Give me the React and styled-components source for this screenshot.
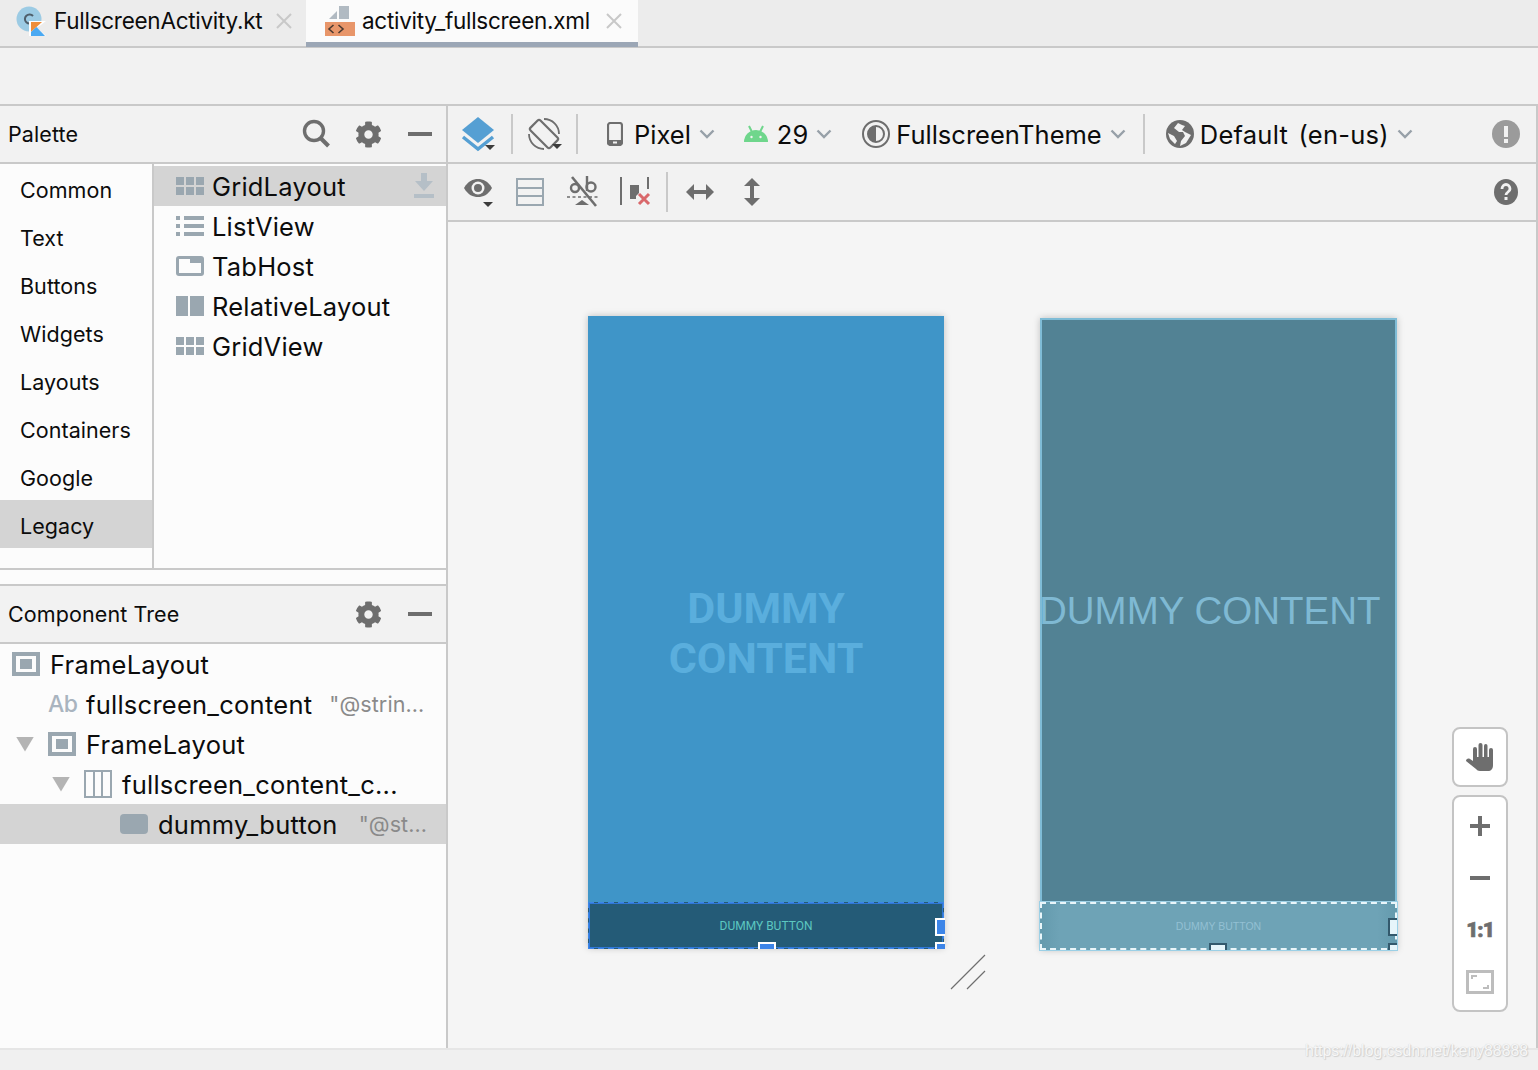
import React from "react";
import styled, { createGlobalStyle } from "styled-components";
import { FaCog } from "react-icons/fa";

const GRAY = "#6e6e6e";
const SLATE = "#9aa7b0";

const GlobalStyle = createGlobalStyle`
	html, body {
		margin: 0;
		padding: 0;
		background: #f2f2f2;
	}
	body {
		font-family: "Inter", "Liberation Sans", sans-serif;
		color: #0c0c0c;
		overflow: hidden;
	}
	* {
		box-sizing: border-box;
	}
`;

const Window = styled.div`
	width: 1538px;
	height: 1070px;
	display: flex;
	flex-direction: column;
	position: relative;
	overflow: hidden;
`;

const TabBar = styled.div`
	height: 48px;
	display: flex;
	background: #ececec;
	border-bottom: 2px solid #c9c9c9;
`;

const Tab = styled.div`
	width: ${(p) => p.$width}px;
	height: ${(p) => (p.$active ? 47 : 46)}px;
	padding-left: ${(p) => p.$pad}px;
	padding-bottom: ${(p) => (p.$active ? 0 : 4)}px;
	display: flex;
	align-items: center;
	background: ${(p) => (p.$active ? "#fbfbfb" : "transparent")};
	border-bottom: ${(p) => (p.$active ? "5px solid #9ca7b6" : "0")};
`;

const TabLabel = styled.span`
	font-size: 22.5px;
	letter-spacing: -0.27px;
	margin: ${(p) => (p.$active ? "-1px 15px 0 7px" : "-1px 13px 0 8px")};
	white-space: nowrap;
`;

const EmptyBar = styled.div`
	height: 58px;
	background: #f2f2f2;
	border-bottom: 2px solid #c9c9c9;
`;

const Main = styled.div`
	height: 942px;
	display: flex;
`;

const LeftPanel = styled.div`
	width: 448px;
	flex: none;
	display: flex;
	flex-direction: column;
	background: #fcfcfc;
	border-right: 2px solid #c9c9c9;
`;

const PanelHeader = styled.div`
	height: 58px;
	flex: none;
	padding: 0 14px 0 8px;
	display: flex;
	align-items: center;
	background: #f2f2f2;
	border-bottom: 2px solid #c9c9c9;
`;

const PanelTitle = styled.span`
	font-size: 21.5px;
	letter-spacing: 0.1px;
	margin-right: auto;
`;

const HeaderIcon = styled.span`
	display: flex;
	align-items: center;
	justify-content: center;
	margin-left: ${(p) => p.$left || 0}px;
	color: ${GRAY};
`;

const Palette = styled.div`
	height: 406px;
	flex: none;
	display: flex;
	border-bottom: 2px solid #c9c9c9;
`;

const Categories = styled.div`
	width: 154px;
	border-right: 2px solid #c9c9c9;
`;

const Category = styled.div`
	height: 48px;
	padding: 4px 0 0 20px;
	display: flex;
	align-items: center;
	font-size: 21.5px;
	letter-spacing: 0.05px;
	background: ${(p) => (p.$active ? "#d4d4d4" : "transparent")};
`;

const Widgets = styled.div`
	flex: 1;
	padding-top: 2px;
`;

const WidgetRow = styled.div`
	height: 40px;
	padding: 0 12px 0 22px;
	display: flex;
	align-items: center;
	gap: 8px;
	font-size: 25.5px;
	letter-spacing: 0.2px;
	background: ${(p) => (p.$active ? "#d4d4d4" : "transparent")};
`;

const Download = styled.span`
	display: flex;
	margin-left: auto;
`;

const Gap = styled.div`
	height: 16px;
	flex: none;
	border-bottom: 2px solid #c9c9c9;
`;

const Tree = styled.div`
	flex: 1;
`;

const TreeRow = styled.div`
	height: 40px;
	padding-left: ${(p) => p.$indent}px;
	display: flex;
	align-items: center;
	font-size: 25.5px;
	letter-spacing: 0.25px;
	white-space: nowrap;
	background: ${(p) => (p.$active ? "#d4d4d4" : "transparent")};
`;

const Twisty = styled.span`
	width: 18px;
	height: 15px;
	margin-right: 14px;
	background: #b4b4b4;
	clip-path: polygon(0 0, 100% 0, 50% 100%);
`;

const TreeIcon = styled.span`
	display: flex;
	width: 28px;
	margin-right: 10px;
`;

const AbIcon = styled.span`
	width: 28px;
	margin-right: 10px;
	color: #a9b4bf;
	font-size: 23px;
	font-weight: 500;
	letter-spacing: -0.5px;
`;

const Hint = styled.span`
	color: #8a8a8a;
	font-size: 21.5px;
	letter-spacing: 0.1px;
	margin-left: ${(p) => p.$left}px;
`;

const Designer = styled.div`
	flex: 1;
	min-width: 0;
	display: flex;
	flex-direction: column;
	border-right: 2px solid #c9c9c9;
`;

const Toolbar = styled.div`
	height: 58px;
	flex: none;
	padding: 0 16px 0 14px;
	display: flex;
	align-items: center;
	background: #f2f2f2;
	border-bottom: 2px solid #c9c9c9;
`;

const Tool = styled.span`
	display: flex;
	align-items: center;
	flex: none;
	margin-left: ${(p) => (p.$push ? "auto" : `${p.$left || 0}px`)};
	margin-right: ${(p) => p.$right || 0}px;
`;

const Divider = styled.span`
	width: 2px;
	height: 40px;
	flex: none;
	background: #c9c9c9;
	margin-left: ${(p) => p.$left}px;
`;

const ToolLabel = styled.span`
	font-size: 25.5px;
	letter-spacing: ${(p) => p.$spacing || 0}px;
	word-spacing: ${(p) => p.$wordGap || 0}px;
	white-space: pre;
	margin: 0 8px 0 ${(p) => p.$left}px;
`;

const Canvas = styled.div`
	flex: 1;
	position: relative;
	display: flex;
	gap: 96px;
	padding: 94px 0 0 140px;
	background: #f5f5f5;
`;

const PhoneFrame = styled.div`
	width: ${(p) => p.$width}px;
	height: 632px;
	margin-top: ${(p) => p.$top}px;
	position: relative;
	box-shadow: 0 0 7px rgba(0, 0, 0, 0.22);
`;

const DesignFrame = styled(PhoneFrame)`
	display: flex;
	align-items: center;
	justify-content: center;
	padding-top: 2px;
	font-family: "Roboto", "Liberation Sans", sans-serif;
	background: #3f95c8;
`;

const BlueprintFrame = styled(PhoneFrame)`
	font-family: "Liberation Sans", sans-serif;
	background: #528294;
	border: 2px solid #7fbcd6;
	border-bottom: 0;
`;

const DesignText = styled.div`
	width: 240px;
	color: #5aaedd;
	font-size: 43px;
	line-height: 50px;
	font-weight: 700;
	text-align: center;
`;

const BlueprintText = styled.div`
	height: 582px;
	margin-left: -3px;
	display: flex;
	align-items: center;
	color: #7fb9d3;
	font-size: 38.5px;
	white-space: nowrap;
`;

const ButtonBar = styled.div`
	position: absolute;
	left: 0;
	right: 0;
	bottom: -1px;
	height: 47px;
	display: flex;
	align-items: center;
	justify-content: center;
	font-size: 12px;
	background: #245b77;
	color: #5cc7c0;
	border: 2px dashed #3d85e8;
	outline: 1px solid #2f78d8;
	outline-offset: -2px;
`;

const BlueprintBar = styled(ButtonBar)`
	left: -2px;
	right: -2px;
	bottom: 0;
	height: 48px;
	font-size: 10.5px;
	background: linear-gradient(90deg, #659bae 0, #6ea3b6 5%, #6ea3b6 95%, #659bae 100%);
	color: #93c0d3;
	border: 2px dashed #eaf6fa;
	outline: 1px solid #9bd0e6;
	outline-offset: 0;
`;

const Handle = styled.span`
	position: absolute;
	width: ${(p) => p.$w}px;
	height: ${(p) => p.$h}px;
	right: ${(p) => p.$right ?? "auto"};
	left: ${(p) => p.$hleft ?? "auto"};
	top: ${(p) => (p.$top !== undefined ? `${p.$top}px` : "auto")};
	bottom: -2px;
	background: ${(p) => p.$fill};
	border: 2px solid ${(p) => p.$line};
	border-bottom: 0;
`;

const SideHandle = styled(Handle)`
	bottom: auto;
	border-bottom: 2px solid ${(p) => p.$line};
	border-right: 0;
`;

const CornerHandle = styled(Handle)`
	border-right: 0;
`;

const ResizeMark = styled.svg`
	position: absolute;
	left: 502px;
	top: 732px;
`;

const FloatStack = styled.div`
	position: absolute;
	right: 28px;
	bottom: 36px;
	display: flex;
	flex-direction: column;
	gap: 8px;
`;

const FloatBox = styled.div`
	width: 56px;
	padding: ${(p) => p.$pad};
	display: flex;
	flex-direction: column;
	align-items: center;
	gap: ${(p) => p.$gap}px;
	background: #fff;
	border: 2px solid #c4c4c4;
	border-radius: 8px;
`;

const ZoomSlot = styled.span`
	height: 36px;
	display: flex;
	align-items: center;
	justify-content: center;
	color: ${GRAY};
`;

const OneToOne = styled.span`
	font-family: "Roboto", sans-serif;
	font-size: 21px;
	font-weight: 900;
	letter-spacing: -1px;
	-webkit-text-stroke: 0.7px ${GRAY};
`;

const StatusBar = styled.div`
	height: 22px;
	flex: none;
	background: #f0f0f0;
	border-top: 2px solid #e6e6e6;
`;

const Watermark = styled.div`
	position: absolute;
	right: 10px;
	bottom: 10px;
	color: #f7f7f7;
	font-family: "Liberation Sans", sans-serif;
	font-size: 15.8px;
	text-shadow: 0 0 1px #c9c9c9, 1px 1px 1px #d0d0d0;
`;

const Chevron = () => (
	<svg width="16" height="10" viewBox="0 0 16 10" fill="none">
		<path d="M1.5 1.5 8 8l6.5-6.5" stroke="#97a0a8" strokeWidth="2.4" />
	</svg>
);

const CloseX = () => (
	<svg width="18" height="18" viewBox="0 0 18 18" fill="none">
		<path d="M2 2l14 14M16 2 2 16" stroke="#c8c8c8" strokeWidth="2" />
	</svg>
);

const KotlinFile = () => (
	<svg width="30" height="30" viewBox="0 0 30 30">
		<circle cx="13" cy="13" r="12.5" fill="#9ccbe4" />
		<path d="M17 10a4.6 4.6 0 1 0 0 6" fill="none" stroke="#4f5f6b" strokeWidth="2" />
		<path d="M13 30V15h17L21 22l9 8z" fill="#fff" />
		<path d="M15 16h11l-11 10z" fill="#ef8e3a" />
		<path d="M15 26l5.5-5L29 30H15z" fill="#4aa9f2" />
	</svg>
);

const XmlFile = () => (
	<svg width="30" height="30" viewBox="0 0 30 30">
		<path d="M4 13 12 5v8zM14 0h10v13H14z" fill="#b1bac2" />
		<rect y="16" width="30" height="14" fill="#e8966a" />
		<path d="M8.5 19 4 23l4.500 4M13.500 19l4.500 4-4.500 4" fill="none" stroke="#4b3a30" strokeWidth="1.600" />
	</svg>
);

const SearchIcon = () => (
	<svg width="30" height="30" viewBox="0 0 30 30" fill="none">
		<circle cx="13" cy="12" r="9.500" stroke={GRAY} strokeWidth="3.400" />
		<path d="m19.500 19 8 8" stroke={GRAY} strokeWidth="4" />
	</svg>
);

const MinusIcon = ({ width = 24 }) => (
	<svg width={width} height="4" viewBox={`0 0 ${width} 4`}>
		<rect width={width} height="4" fill={GRAY} />
	</svg>
);

const DownloadIcon = () => (
	<svg width="20" height="26" viewBox="0 0 20 26">
		<path d="M7 0h6v8h6l-9 10L1 8h6z" fill="#b5bfc7" />
		<rect y="21" width="20" height="4" fill="#b5bfc7" />
	</svg>
);

const GridIcon = () => (
	<svg width="28" height="18" viewBox="0 0 28 18" fill={SLATE}>
		<rect width="8" height="8" />
		<rect x="10" width="8" height="8" />
		<rect x="20" width="8" height="8" />
		<rect y="10" width="8" height="8" />
		<rect x="10" y="10" width="8" height="8" />
		<rect x="20" y="10" width="8" height="8" />
	</svg>
);

const ListIcon = () => (
	<svg width="28" height="20" viewBox="0 0 28 20" fill={SLATE}>
		<rect width="4" height="4" />
		<rect x="8" width="20" height="4" />
		<rect y="8" width="4" height="4" />
		<rect x="8" y="8" width="20" height="4" />
		<rect y="16" width="4" height="4" />
		<rect x="8" y="16" width="20" height="4" />
	</svg>
);

const TabHostIcon = () => (
	<svg width="28" height="20" viewBox="0 0 28 20">
		<rect width="28" height="20" rx="3" fill={SLATE} />
		<path d="M3 3h11v4h11v10H3z" fill="#fcfcfc" />
	</svg>
);

const RelativeIcon = () => (
	<svg width="28" height="20" viewBox="0 0 28 20" fill={SLATE}>
		<rect width="12" height="20" />
		<rect x="14" width="14" height="20" />
	</svg>
);

const FrameIcon = () => (
	<svg width="28" height="24" viewBox="0 0 28 24">
		<rect x="2" y="2" width="24" height="20" fill="none" stroke={SLATE} strokeWidth="4" />
		<rect x="8" y="7" width="12" height="10" fill={SLATE} />
	</svg>
);

const ColumnsIcon = () => (
	<svg width="28" height="28" viewBox="0 0 28 28" fill="none" stroke={SLATE} strokeWidth="2">
		<rect x="1" y="1" width="26" height="26" />
		<path d="M10 1v26M18 1v26" />
	</svg>
);

const ButtonIcon = () => (
	<svg width="28" height="20" viewBox="0 0 28 20">
		<rect width="28" height="20" rx="4" fill={SLATE} />
	</svg>
);

const LayersIcon = () => (
	<svg width="36" height="36" viewBox="0 0 36 36">
		<path d="M17 1 33 14 17 27 1 14z" fill="#559fd3" />
		<path d="M2 21l15 12 15-12" fill="none" stroke="#559fd3" strokeWidth="3.500" />
		<path d="M24 29h10l-5 5z" fill="#3c3c3c" />
	</svg>
);

const RotateIcon = () => (
	<svg width="36" height="34" viewBox="0 0 36 34" fill="none" stroke={GRAY}>
		<rect x="9" y="3" width="14" height="28" rx="2" strokeWidth="2.200" transform="rotate(-45 16 17)" />
		<path d="M16 2a15 15 0 0 1 15 15M16 32A15 15 0 0 1 1 17" strokeWidth="1.800" />
		<path d="M24 27h10l-5 5z" fill="#3c3c3c" stroke="none" />
	</svg>
);

const PhoneIcon = () => (
	<svg width="16" height="24" viewBox="0 0 16 24">
		<rect x="1" y="1" width="14" height="22" rx="2.500" fill="none" stroke={GRAY} strokeWidth="2.200" />
		<rect x="1" y="18" width="14" height="5" fill={GRAY} />
		<rect x="6" y="19.500" width="4" height="2" fill="#f2f2f2" />
	</svg>
);

const AndroidIcon = () => (
	<svg width="24" height="18" viewBox="0 0 24 18">
		<path d="M0 17a12 12 0 0 1 24 0z" fill="#6fd68c" />
		<path d="M5 1l3 6M19 1l-3 6" stroke="#6fd68c" strokeWidth="2" />
		<circle cx="7.500" cy="12" r="1.200" fill="#f2f2f2" />
		<circle cx="16.500" cy="12" r="1.200" fill="#f2f2f2" />
	</svg>
);

const ThemeIcon = () => (
	<svg width="28" height="28" viewBox="0 0 28 28">
		<circle cx="14" cy="14" r="13" fill="none" stroke={GRAY} strokeWidth="2" />
		<circle cx="14" cy="14" r="8" fill="none" stroke={GRAY} strokeWidth="2" />
		<path d="M14 6a8 8 0 0 0 0 16z" fill={GRAY} />
	</svg>
);

const GlobeIcon = () => (
	<svg width="28" height="28" viewBox="0 0 28 28">
		<circle cx="14" cy="14" r="14" fill={GRAY} />
		<path d="M12 3 8 8l5 4 4 0 2 4-4 5-1 5 6-3 5-8-2-1-4-2-3-2 3-4-3-1zM2 13l6 3 3 5-2 3-5-5z" fill="#f2f2f2" />
	</svg>
);

const AlertIcon = () => (
	<svg width="28" height="28" viewBox="0 0 28 28">
		<circle cx="14" cy="14" r="14" fill="#9b9b9b" />
		<rect x="12" y="6" width="4" height="11" fill="#f2f2f2" />
		<rect x="12" y="19" width="4" height="4" fill="#f2f2f2" />
	</svg>
);

const EyeIcon = () => (
	<svg width="34" height="34" viewBox="0 0 34 34">
		<path d="M1 13C5 6 10 4 15 4s10 2 14 9c-4 7-9 9-14 9S5 20 1 13z" fill={GRAY} />
		<circle cx="15" cy="13" r="6.500" fill="#f2f2f2" />
		<circle cx="15" cy="13" r="4" fill={GRAY} />
		<path d="M20 27h10l-5 5z" fill="#3c3c3c" />
	</svg>
);

const RowsIcon = () => (
	<svg width="28" height="28" viewBox="0 0 28 28" fill="none" stroke={SLATE} strokeWidth="2">
		<rect x="1" y="1" width="26" height="26" />
		<path d="M1 10h26M1 18h26" />
	</svg>
);

const BaselineIcon = () => (
	<svg width="34" height="34" viewBox="0 0 34 34" fill="none">
		<path d="M6 2l24 29" stroke={GRAY} strokeWidth="2.600" />
		<path d="M21 1v15" stroke={GRAY} strokeWidth="2.400" />
		<circle cx="25" cy="12" r="4.500" stroke={GRAY} strokeWidth="2.400" />
		<circle cx="9" cy="13" r="4" stroke={GRAY} strokeWidth="2.400" />
		<path d="M1 22h31" stroke={GRAY} strokeWidth="1.600" strokeDasharray="3 2.500" />
		<path d="M9 30l7-5 7 5z" fill={GRAY} />
	</svg>
);

const ClearIcon = () => (
	<svg width="32" height="30" viewBox="0 0 32 30">
		<rect width="2" height="28" fill={GRAY} />
		<path d="M10 8h9v8l-3 3v3h-6z" fill={GRAY} />
		<rect x="27" width="2" height="12" fill={GRAY} />
		<path d="m19 17 10 10M29 17 19 27" stroke="#d9686b" strokeWidth="3" />
	</svg>
);

const ArrowH = () => (
	<svg width="28" height="16" viewBox="0 0 28 16" fill={GRAY}>
		<path d="M0 8l8-8v6h12V0l8 8-8 8v-6H8v6z" />
	</svg>
);

const ArrowV = () => (
	<svg width="16" height="28" viewBox="0 0 16 28" fill={GRAY}>
		<path d="M8 0l8 8h-6v12h6l-8 8-8-8h6V8H0z" />
	</svg>
);

const HelpIcon = () => (
	<svg width="24" height="26" viewBox="0 0 24 26">
		<ellipse cx="12" cy="13" rx="12" ry="13" fill={GRAY} />
		<path d="M8 10c0-6 8-6 8 0 0 3-4 3-4 6" fill="none" stroke="#f2f2f2" strokeWidth="2.800" />
		<rect x="10.500" y="18" width="3" height="3" fill="#f2f2f2" />
	</svg>
);

const HandIcon = () => (
	<svg width="28" height="30" viewBox="0 0 28 30" fill={GRAY}>
		<rect x="7" y="5" width="4" height="16" rx="2" />
		<rect x="12.500" y="1" width="4" height="20" rx="2" />
		<rect x="18" y="2" width="3.500" height="19" rx="1.700" />
		<rect x="23" y="6" width="4" height="15" rx="2" />
		<path d="M7 15h20v8c0 4-2 6-5 6h-8c-2 0-3-1-4-2L0 19c0-2 2-3 4-2l3 2z" />
	</svg>
);

const PlusIcon = () => (
	<svg width="20" height="20" viewBox="0 0 20 20" fill={GRAY}>
		<rect y="8" width="20" height="4" />
		<rect x="8" width="4" height="20" />
	</svg>
);

const FitIcon = () => (
	<svg width="28" height="24" viewBox="0 0 28 24" fill="none" stroke="#bdbdbd">
		<rect x="1.500" y="1.500" width="25" height="21" strokeWidth="3" />
		<path d="M6 9V6h5M22 15v3h-5" strokeWidth="2" />
	</svg>
);

const categories = ["Common", "Text", "Buttons", "Widgets", "Layouts", "Containers", "Google", "Legacy"];

const widgets = [
	{ name: "GridLayout", icon: <GridIcon />, active: true },
	{ name: "ListView", icon: <ListIcon /> },
	{ name: "TabHost", icon: <TabHostIcon /> },
	{ name: "RelativeLayout", icon: <RelativeIcon /> },
	{ name: "GridView", icon: <GridIcon /> },
];

function LeftSide() {
	return (
		<LeftPanel>
			<PanelHeader>
				<PanelTitle>Palette</PanelTitle>
				<HeaderIcon><SearchIcon /></HeaderIcon>
				<HeaderIcon $left={24}><FaCog size={27} /></HeaderIcon>
				<HeaderIcon $left={26}><MinusIcon /></HeaderIcon>
			</PanelHeader>
			<Palette>
				<Categories>
					{categories.map((c) => (
						<Category key={c} $active={c === "Legacy"}>{c}</Category>
					))}
				</Categories>
				<Widgets>
					{widgets.map((w) => (
						<WidgetRow key={w.name} $active={w.active}>
							{w.icon}
							{w.name}
							{w.active && <Download><DownloadIcon /></Download>}
						</WidgetRow>
					))}
				</Widgets>
			</Palette>
			<Gap />
			<PanelHeader>
				<PanelTitle>Component Tree</PanelTitle>
				<HeaderIcon><FaCog size={27} /></HeaderIcon>
				<HeaderIcon $left={26}><MinusIcon /></HeaderIcon>
			</PanelHeader>
			<Tree>
				<TreeRow $indent={12}>
					<TreeIcon><FrameIcon /></TreeIcon>
					FrameLayout
				</TreeRow>
				<TreeRow $indent={48}>
					<AbIcon>Ab</AbIcon>
					fullscreen_content
					<Hint $left={17}>"@strin...</Hint>
				</TreeRow>
				<TreeRow $indent={16}>
					<Twisty />
					<TreeIcon><FrameIcon /></TreeIcon>
					FrameLayout
				</TreeRow>
				<TreeRow $indent={52}>
					<Twisty />
					<TreeIcon><ColumnsIcon /></TreeIcon>
					fullscreen_content_c...
				</TreeRow>
				<TreeRow $indent={120} $active>
					<TreeIcon><ButtonIcon /></TreeIcon>
					dummy_button
					<Hint $left={21}>"@st...</Hint>
				</TreeRow>
			</Tree>
		</LeftPanel>
	);
}

function ConfigToolbar() {
	return (
		<Toolbar>
			<Tool $left={-1}><LayersIcon /></Tool>
			<Divider $left={14} />
			<Tool $left={15}><RotateIcon /></Tool>
			<Divider $left={12} />
			<Tool $left={29}><PhoneIcon /></Tool>
			<ToolLabel $left={11}>Pixel</ToolLabel>
			<Chevron />
			<Tool $left={29}><AndroidIcon /></Tool>
			<ToolLabel $left={9}>29</ToolLabel>
			<Chevron />
			<Tool $left={30}><ThemeIcon /></Tool>
			<ToolLabel $left={6}>FullscreenTheme</ToolLabel>
			<Chevron />
			<Divider $left={17} />
			<Tool $left={21}><GlobeIcon /></Tool>
			<ToolLabel $left={6} $spacing={0.25} $wordGap={3}>Default (en-us)</ToolLabel>
			<Chevron />
			<Tool $push><AlertIcon /></Tool>
		</Toolbar>
	);
}

function LayoutToolbar() {
	return (
		<Toolbar>
			<Tool $left={1}><EyeIcon /></Tool>
			<Tool $left={19}><RowsIcon /></Tool>
			<Tool $left={22}><BaselineIcon /></Tool>
			<Tool $left={20}><ClearIcon /></Tool>
			<Divider $left={14} />
			<Tool $left={18}><ArrowH /></Tool>
			<Tool $left={30}><ArrowV /></Tool>
			<Tool $push $right={2}><HelpIcon /></Tool>
		</Toolbar>
	);
}

function DesignPreview() {
	return (
		<DesignFrame $width={356} $top={0}>
			<DesignText>DUMMY CONTENT</DesignText>
			<ButtonBar>
				DUMMY BUTTON
				<SideHandle $w={10} $h={18} $right="-3px" $top={14} $fill="#3d85e8" $line="#fff" />
				<Handle $w={18} $h={7} $hleft="168px" $fill="#3d85e8" $line="#fff" />
				<CornerHandle $w={10} $h={7} $right="-3px" $fill="#3d85e8" $line="#fff" />
			</ButtonBar>
		</DesignFrame>
	);
}

function BlueprintPreview() {
	return (
		<BlueprintFrame $width={357} $top={2}>
			<BlueprintText>DUMMY CONTENT</BlueprintText>
			<BlueprintBar>
				DUMMY BUTTON
				<SideHandle $w={9} $h={18} $right="-2px" $top={14} $fill="#e6f5fa" $line="#33596c" />
				<Handle $w={18} $h={7} $hleft="167px" $fill="#e6f5fa" $line="#33596c" />
				<CornerHandle $w={9} $h={7} $right="-2px" $fill="#e6f5fa" $line="#33596c" />
			</BlueprintBar>
		</BlueprintFrame>
	);
}

export default function App() {
	return (
		<Window>
			<GlobalStyle />
			<TabBar>
				<Tab $width={306} $pad={16}>
					<KotlinFile />
					<TabLabel>FullscreenActivity.kt</TabLabel>
					<CloseX />
				</Tab>
				<Tab $width={332} $pad={19} $active>
					<XmlFile />
					<TabLabel $active>activity_fullscreen.xml</TabLabel>
					<CloseX />
				</Tab>
			</TabBar>
			<EmptyBar />
			<Main>
				<LeftSide />
				<Designer>
					<ConfigToolbar />
					<LayoutToolbar />
					<Canvas>
						<DesignPreview />
						<BlueprintPreview />
						<ResizeMark width="36" height="36" viewBox="0 0 36 36" fill="none" stroke="#6f6f6f">
							<path d="M1 35 35 1M17 35 35 17" strokeWidth="1.200" />
						</ResizeMark>
						<FloatStack>
							<FloatBox $pad="10px 0" $gap={0}>
								<ZoomSlot><HandIcon /></ZoomSlot>
							</FloatBox>
							<FloatBox $pad="11px 0 10px" $gap={16}>
								<ZoomSlot><PlusIcon /></ZoomSlot>
								<ZoomSlot><MinusIcon width={20} /></ZoomSlot>
								<ZoomSlot><OneToOne>1:1</OneToOne></ZoomSlot>
								<ZoomSlot><FitIcon /></ZoomSlot>
							</FloatBox>
						</FloatStack>
					</Canvas>
				</Designer>
			</Main>
			<StatusBar />
			<Watermark>https://blog.csdn.net/keny88888</Watermark>
		</Window>
	);
}
